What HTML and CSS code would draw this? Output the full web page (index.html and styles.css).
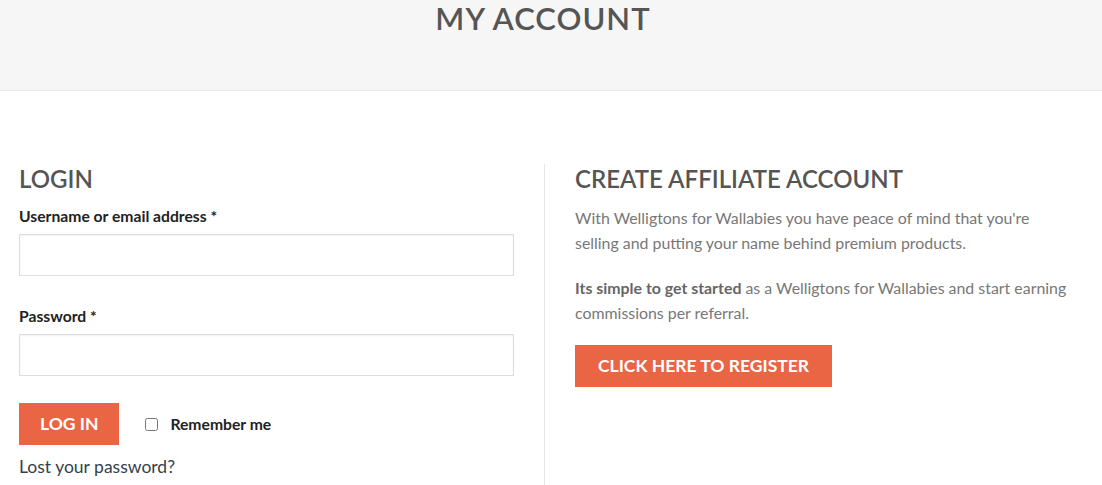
FILE: index.html
```html
<!doctype html>
<html lang="en">
    <head>
        <meta charset="utf-8">
        <title>My Account</title>
        <link rel="stylesheet" href="styles.css">
    </head>
    <body>
        <div class="page-title">
            <h1>My Account</h1>
        </div>
        <div class="account">
            <div class="col col-login">
                <h2>Login</h2>
                <form class="login-form">
                    <label for="username">Username or email address <span class="required">*</span></label>
                    <input type="text" id="username" class="text-input">
                    <label for="password">Password <span class="required">*</span></label>
                    <input type="password" id="password" class="text-input">
                    <div class="login-row">
                        <button type="button" class="btn">Log in</button>
                        <label class="remember"><input type="checkbox"> Remember me</label>
                    </div>
                    <a href="#" class="lost">Lost your password?</a>
                </form>
            </div>
            <div class="col col-register">
                <h2>Create Affiliate Account</h2>
                <p>With Welligtons for Wallabies you have peace of mind that you're selling and putting your name behind premium products.</p>
                <p><strong>Its simple to get started</strong> as a Welligtons for Wallabies and start earning commissions per referral.</p>
                <a href="#" class="btn btn-register">Click here to register</a>
            </div>
        </div>
    </body>
</html>
```

FILE: styles.css
```css
html, body{
    margin: 0;
    padding: 0;
    background: #fff;
}
body{
    font-family: Lato, "Open Sans", sans-serif;
    font-size: 15.9px;
    color: #777;
}
.page-title{
    height: 90px;
    background: #f6f6f6;
    border-bottom: 1px solid #e8e8e8;
    text-align: center;
}
.page-title h1{
    margin: 0;
    padding-right: 16px;
    font-size: 31px;
    line-height: 36px;
    font-weight: 600;
    letter-spacing: 1px;
    text-transform: uppercase;
    color: #555;
}
.account{
    display: flex;
    padding: 73px 0 0 19px;
    min-height: 321px;
}
.col h2{
    margin: 0 0 12px 0;
    font-size: 24px;
    line-height: 29px;
    font-weight: 600;
    text-transform: uppercase;
    color: #555;
}
.col-login{
    width: 495px;
    padding-right: 30px;
    border-right: 1px solid #e6e6e6;
}
.col-register{
    width: 497px;
    padding-left: 30px;
}
.login-form label{
    display: block;
    font-size: 15.7px;
    font-weight: 700;
    color: #222;
    line-height: 22px;
    margin-bottom: 7px;
}
.text-input{
    display: block;
    box-sizing: border-box;
    width: 100%;
    height: 42px;
    margin: 0 0 29px 0;
    border: 1px solid #ddd;
    box-shadow: inset 0 1px 2px rgba(0,0,0,0.06);
    background: #fff;
    font-family: inherit;
    font-size: 15px;
}
.login-row{
    display: flex;
    align-items: center;
    gap: 26px;
    margin-top: -2px;
}
.btn{
    display: inline-block;
    box-sizing: border-box;
    height: 42px;
    padding: 0 21px;
    border: 0;
    background: #ea6544;
    color: #fff;
    font-family: inherit;
    font-size: 17.5px;
    font-weight: 700;
    line-height: 42px;
    text-transform: uppercase;
    text-decoration: none;
    cursor: pointer;
}
.btn-register{
    padding: 0 23px;
}
.login-form .remember{
    display: flex;
    align-items: center;
    gap: 12px;
    margin: 0;
    color: #222;
}
.remember input{
    margin: 0;
    width: 13px;
    height: 13px;
}
.lost{
    display: block;
    margin-top: 11px;
    font-size: 17.5px;
    color: #353f4c;
    text-decoration: none;
}
.col-register p{
    margin: 0 0 20px 0;
    line-height: 25px;
}
.col-register strong{
    color: #666;
}
```
